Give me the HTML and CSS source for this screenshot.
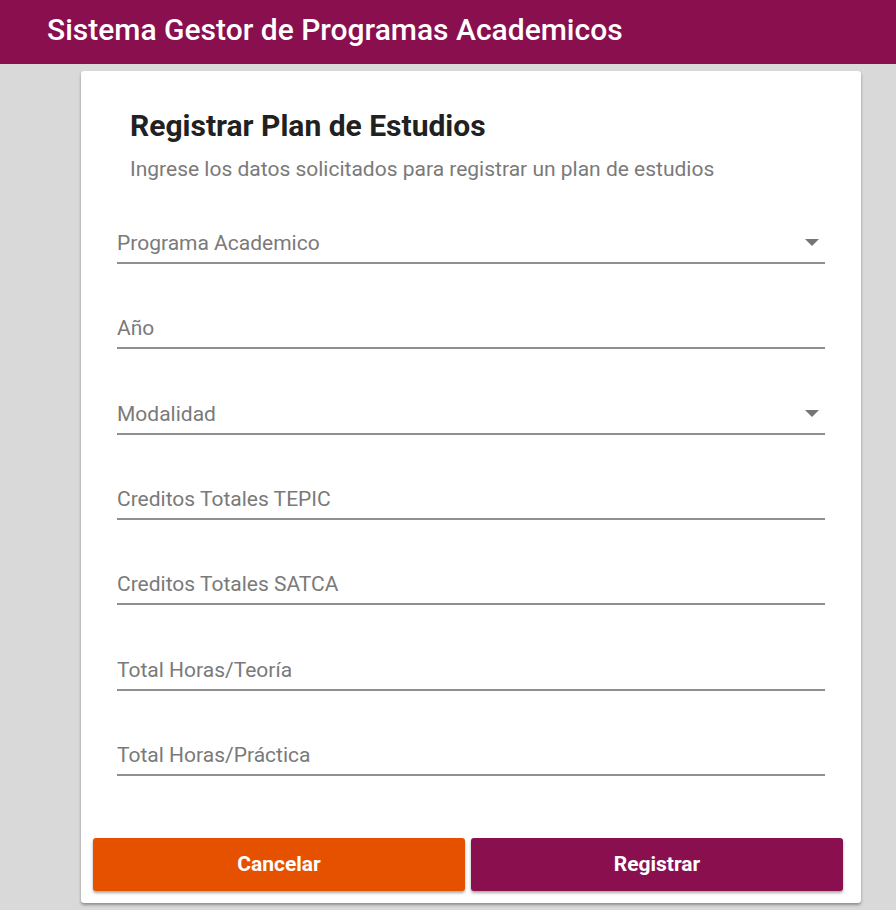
FILE: index.html
```html
<!DOCTYPE html>
<html lang="es">
<head>
<meta charset="utf-8">
<title>Sistema Gestor de Programas Academicos</title>
<link rel="stylesheet" href="styles.css">
</head>
<body>
<header class="topbar">
  <h1 class="topbar-title">Sistema Gestor de Programas Academicos</h1>
</header>
<main class="main">
  <section class="card">
    <div class="card-head">
      <h2 class="card-title">Registrar Plan de Estudios</h2>
      <p class="card-sub">Ingrese los datos solicitados para registrar un plan de estudios</p>
    </div>
    <form class="form">
      <div class="field field-select">
        <span class="label">Programa Academico</span>
        <span class="arrow"></span>
      </div>
      <div class="field"><span class="label">Año</span></div>
      <div class="field field-select">
        <span class="label">Modalidad</span>
        <span class="arrow"></span>
      </div>
      <div class="field"><span class="label">Creditos Totales TEPIC</span></div>
      <div class="field"><span class="label">Creditos Totales SATCA</span></div>
      <div class="field"><span class="label">Total Horas/Teoría</span></div>
      <div class="field"><span class="label">Total Horas/Práctica</span></div>
    </form>
    <div class="actions">
      <button type="button" class="btn btn-cancel">Cancelar</button>
      <button type="button" class="btn btn-submit">Registrar</button>
    </div>
  </section>
</main>
</body>
</html>
```
FILE: styles.css
```css
* { box-sizing: border-box; }
html, body { margin: 0; padding: 0; }
body {
  background: #d9d9d9;
  font-family: Roboto, "Liberation Sans", sans-serif;
  height: 910px;
  overflow: hidden;
}
.topbar {
  height: 64px;
  background: #890f4f;
  display: flex;
  align-items: center;
  padding-left: 47px;
}
.topbar-title {
  margin: 0;
  color: #fff;
  font-size: 30px;
  font-weight: 500;
  line-height: 34px;
  padding-bottom: 4px;
}
.main {
  padding: 7px 0 0 81px;
}
.card {
  width: 780px;
  background: #fff;
  border-radius: 3px;
  box-shadow: 0 2px 3px rgba(0,0,0,0.35);
  padding-bottom: 12px;
}
.card-head {
  padding: 39px 0 0 49px;
}
.card-title {
  margin: 0;
  font-size: 30px;
  font-weight: 700;
  color: #212121;
  line-height: 32px;
}
.card-sub {
  margin: 15px 0 0;
  font-size: 21px;
  color: #7a7a7a;
  line-height: 24px;
}
.form {
  display: flex;
  flex-direction: column;
  gap: 43.33px;
  padding: 0 36px;
  margin-top: 41px;
}
.field {
  height: 42px;
  border-bottom: 2px solid #8f8f8f;
  display: flex;
  align-items: flex-end;
  justify-content: space-between;
  padding-bottom: 7px;
}
.label {
  font-size: 21px;
  line-height: 24px;
  color: #7a7a7a;
}
.arrow {
  width: 0;
  height: 0;
  border-left: 7px solid transparent;
  border-right: 7px solid transparent;
  border-top: 7px solid #757575;
  margin: 0 6px 9px 0;
}
.actions {
  display: flex;
  gap: 6px;
  padding: 0 18px 0 12px;
  margin-top: 62px;
}
.btn {
  flex: 1;
  height: 53px;
  border: 0;
  border-radius: 3px;
  color: #fff;
  font-family: Roboto, "Liberation Sans", sans-serif;
  font-size: 21px;
  font-weight: 700;
  box-shadow: 0 2px 3px rgba(0,0,0,0.35);
}
.btn-cancel { background: #e65100; }
.btn-submit { background: #890f4f; }
```
